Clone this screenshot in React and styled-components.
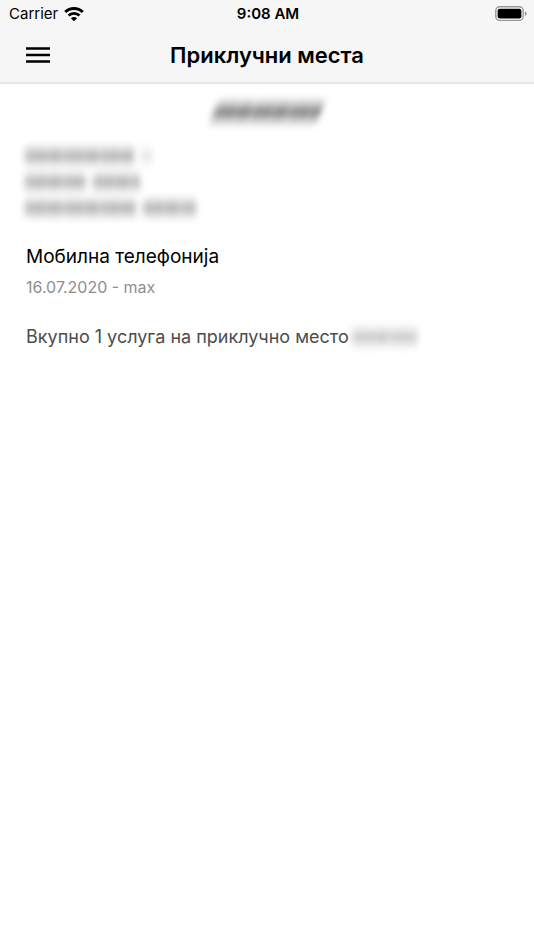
import React from "react";
import styled, { createGlobalStyle } from "styled-components";

const GlobalStyle = createGlobalStyle`
  * { box-sizing: border-box; }
  body {
    margin: 0;
    background: #fff;
    color: #000;
    font-family: Inter, "Liberation Sans", sans-serif;
  }
`;

const Screen = styled.div`
  min-height: 100vh;
  background: #fff;
`;

const TopArea = styled.header`
  background: #f6f6f6;
  border-bottom: 2px solid #e6e6e6;
`;

const StatusBar = styled.div`
  display: grid;
  grid-template-columns: 1fr auto 1fr;
  align-items: center;
  height: 28px;
  padding: 0 7px 0 9px;
  font-size: 15px;
  line-height: 20px;
`;

const Carrier = styled.div`
  display: flex;
  align-items: center;
  gap: 6px;
`;

const Clock = styled.time`
  font-weight: 600;
`;

const BatterySlot = styled.div`
  display: flex;
  justify-content: flex-end;
`;

const NavBar = styled.div`
  display: grid;
  grid-template-columns: 48px 1fr 48px;
  align-items: center;
  height: 54px;
  padding: 0 14px;
`;

const MenuButton = styled.button`
  display: flex;
  align-items: center;
  justify-content: center;
  width: 48px;
  height: 48px;
  padding: 0;
  border: 0;
  background: none;
  color: #000;
  cursor: pointer;
`;

const Title = styled.h1`
  margin: 0;
  font-size: 22px;
  font-weight: 600;
  line-height: 28px;
  text-align: center;
`;

const Content = styled.main`
  padding: 10px 24px;
`;

const Heading = styled.div`
  display: flex;
  justify-content: center;
  align-items: center;
  height: 36px;
`;

const Address = styled.div`
  display: flex;
  flex-direction: column;
  align-items: flex-start;
  gap: 2px;
  margin-top: 14px;
`;

const AddressLine = styled.div`
  display: flex;
  gap: 6px;
`;

const Redacted = styled.span`
  display: inline-block;
  width: ${(p) => p.$width}px;
  height: ${(p) => p.$height || 24}px;
  opacity: ${(p) => p.$strength || 0.42};
  transform: skewX(${(p) => (p.$slanted ? -18 : 0)}deg);
  filter: blur(3px);
  background:
    repeating-linear-gradient(90deg, rgba(255, 255, 255, 0.3) 0 3px, transparent 6px 9px, rgba(255, 255, 255, 0.15) 12px, transparent 15px 19px, rgba(255, 255, 255, 0.2) 23px, transparent 27px 37px),
    linear-gradient(rgba(0, 0, 0, 0.1), rgba(0, 0, 0, 0.35) 25%, rgba(0, 0, 0, 0.75) 50%, rgba(0, 0, 0, 0.35) 75%, rgba(0, 0, 0, 0.1));
`;

const Service = styled.section`
  padding: 0 2px;
  margin-top: 23px;
`;

const ServiceName = styled.h2`
  margin: 0;
  font-size: 19px;
  font-weight: 400;
  line-height: 28px;
`;

const ServiceMeta = styled.p`
  margin: 2px 0 0;
  color: #8e8e90;
  font-size: 16px;
  line-height: 28px;
`;

const Summary = styled.p`
  display: flex;
  align-items: center;
  gap: 2px;
  margin: 22px 0 0;
  padding: 0 2px;
  color: #4c4c4c;
  font-size: 18px;
  line-height: 28px;
`;

function WifiIcon() {
  return (
    <svg width="20" height="15" viewBox="0 0 20 15" aria-label="Wi-Fi" role="img">
      <g fill="none" stroke="#000" strokeWidth="2.8">
        <path d="M1.2 5C6.1.3 13.9.3 18.8 5" />
        <path d="M4.5 8.5c3.1-2.9 7.9-2.9 11 0" />
      </g>
      <path d="M6.9 11.2c1.8-1.6 4.4-1.6 6.2 0L10 14.3z" />
    </svg>
  );
}

function BatteryIcon() {
  return (
    <svg width="32" height="16" viewBox="0 0 32 16" aria-label="Battery" role="img">
      <rect x="0.8" y="0.8" width="27.4" height="13.6" rx="4" fill="#fff" stroke="#969696" strokeWidth="1.4" />
      <rect x="2.6" y="2.7" width="23.8" height="9.8" rx="2" />
      <path d="M30 5.4c2.1.8 2.1 3.6 0 4.4z" fill="#868686" />
    </svg>
  );
}

function MenuIcon() {
  return (
    <svg width="24" height="16" viewBox="0 0 24 16" aria-hidden="true">
      <path d="M0 1.5h24M0 8h24M0 14.5h24" stroke="currentColor" strokeWidth="2.6" />
    </svg>
  );
}

export default function App() {
  return (
    <Screen>
      <GlobalStyle />
      <TopArea>
        <StatusBar>
          <Carrier>
            <span>Carrier</span>
            <WifiIcon />
          </Carrier>
          <Clock>9:08 AM</Clock>
          <BatterySlot>
            <BatteryIcon />
          </BatterySlot>
        </StatusBar>
        <NavBar>
          <MenuButton type="button" aria-label="Мени">
            <MenuIcon />
          </MenuButton>
          <Title>Приклучни места</Title>
        </NavBar>
      </TopArea>
      <Content>
        <Heading>
          <Redacted $width={108} $height={28} $strength={0.68} $slanted />
        </Heading>
        <Address>
          <AddressLine>
            <Redacted $width={110} />
            <Redacted $width={12} $strength={0.14} />
          </AddressLine>
          <AddressLine>
            <Redacted $width={62} />
            <Redacted $width={48} />
          </AddressLine>
          <AddressLine>
            <Redacted $width={112} />
            <Redacted $width={54} />
          </AddressLine>
        </Address>
        <Service>
          <ServiceName>Мобилна телефонија</ServiceName>
          <ServiceMeta>16.07.2020 - max</ServiceMeta>
        </Service>
        <Summary>
          Вкупно 1 услуга на приклучно место
          <Redacted $width={66} $strength={0.3} />
        </Summary>
      </Content>
    </Screen>
  );
}
